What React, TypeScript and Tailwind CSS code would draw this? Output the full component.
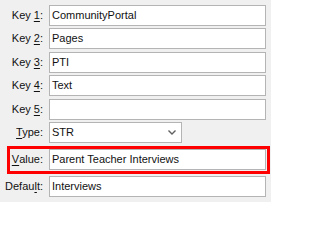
import type { ReactNode } from 'react'

// Campo di testo in stile Windows classico
function Field({ value, w = 'w-[217px]' }: { value?: string; w?: string }) {
  return (
    <div className={`${w} h-[21px] flex items-center border border-[#b4b4b4] bg-white pl-[2px] text-[11px] text-[#111111] overflow-hidden whitespace-nowrap`}>
      {value}
    </div>
  )
}

function Row({ label, children, className = '' }: { label: ReactNode; children: ReactNode; className?: string }) {
  return (
    <div className={`flex items-center h-[21px] ${className}`}>
      <div className="w-[43px] text-right text-[11px] text-[#111111] whitespace-nowrap">{label}</div>
      <div className="ml-[6px]">{children}</div>
    </div>
  )
}

const U = ({ children }: { children: ReactNode }) => <span className="underline underline-offset-[2px]">{children}</span>

export default function App() {
  return (
    <div className="w-[271px] h-[202px] bg-[#f0f0f0] pt-[5px] overflow-hidden" style={{ fontFamily: '"Liberation Sans", Arial, sans-serif' }}>
      <Row label={<>Key <U>1</U>:</>}><Field value="CommunityPortal" /></Row>
      <Row label={<>Key <U>2</U>:</>} className="mt-[2px]"><Field value="Pages" /></Row>
      <Row label={<>Key <U>3</U>:</>} className="mt-[3px]"><Field value="PTI" /></Row>
      <Row label={<>Key <U>4</U>:</>} className="mt-[2px]"><Field value="Text" /></Row>
      <Row label={<>Key <U>5</U>:</>} className="mt-[3px]"><Field /></Row>
      <Row label={<><U>T</U>ype:</>} className="mt-[2px]">
        <div className="w-[133px] h-[21px] flex items-center justify-between border border-[#b4b4b4] bg-white pl-[2px] pr-[5px] text-[11px] text-[#111111]">
          <span>STR</span>
          <svg width="8" height="5" viewBox="0 0 8 5">
            <path d="M0.5 0.5 L4 4 L7.5 0.5" fill="none" stroke="#606060" strokeWidth="1.4" />
          </svg>
        </div>
      </Row>

      {/* Campo evidenziato in rosso */}
      <div className="mt-[3px] ml-[7px] w-[263px] h-[28px] border-[3px] border-[#ff0000]">
        <div className="flex items-start h-[21px]">
          <div className="w-[33px] h-[21px] flex items-center justify-end text-[11px] text-[#111111] whitespace-nowrap"><U>V</U>alue:</div>
          <div className="ml-[6px]"><Field value="Parent Teacher Interviews" /></div>
        </div>
      </div>

      <Row label={<>Defau<U>l</U>t:</>} className="mt-[2px]"><Field value="Interviews" /></Row>
    </div>
  )
}
